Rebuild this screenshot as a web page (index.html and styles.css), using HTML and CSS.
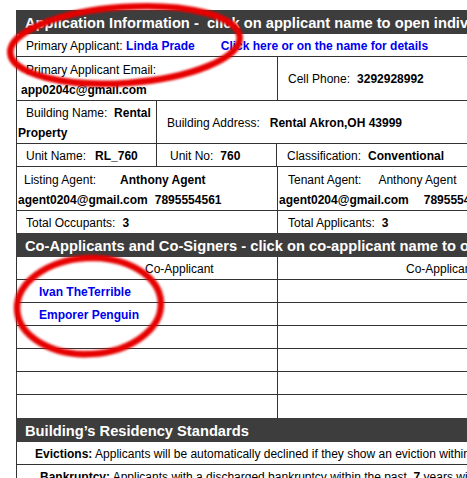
FILE: index.html
```html
<!DOCTYPE html>
<html>
<head>
<meta charset="utf-8">
<link rel="stylesheet" href="styles.css">
</head>
<body>
<div class="sheet">
  <div class="bar">Application Information -&nbsp; click on applicant name to open individual applications</div>

  <div class="row">
    <div class="cell wide pad-one">
      <span class="ind9">Primary Applicant: </span><span class="link">Linda Prade</span><span class="link details">Click here or on the name for details</span>
    </div>
  </div>

  <div class="row">
    <div class="cell half two-line">
      <div class="ind9">Primary Applicant Email:</div>
      <div class="val ind4">app0204c@gmail.com</div>
    </div>
    <div class="cell rest mid">
      <span class="ind10">Cell Phone:</span><span class="val gap8">3292928992</span>
    </div>
  </div>

  <div class="row">
    <div class="cell narrow tight">
      <span class="ind9">Building Name:</span>&nbsp;&nbsp;<b>Rental Property</b>
    </div>
    <div class="cell rest mid">
      <span class="ind10">Building Address:</span><span class="val gap10">Rental Akron,OH 43999</span>
    </div>
  </div>

  <div class="row">
    <div class="cell narrow pad-one">
      <span class="ind9">Unit Name:</span><span class="val gap9">RL_760</span>
    </div>
    <div class="cell unitno pad-one">
      <span class="ind12">Unit No:</span><span class="val gap8">760</span>
    </div>
    <div class="cell rest pad-one">
      <span class="ind10">Classification:</span><span class="val gap8">Conventional</span>
    </div>
  </div>

  <div class="row">
    <div class="cell half two-line">
      <div><span class="ind7">Listing Agent:</span><span class="val gap24">Anthony Agent</span></div>
      <div><span class="val">agent0204@gmail.com</span><span class="val gap8">7895554561</span></div>
    </div>
    <div class="cell rest two-line">
      <div><span class="ind10">Tenant Agent:</span><span class="gap17">Anthony Agent</span></div>
      <div><span class="val">agent0204@gmail.com</span><span class="val gap15">7895554561</span></div>
    </div>
  </div>

  <div class="row last">
    <div class="cell half totals">
      <span class="ind9">Total Occupants:</span><span class="val gap8">3</span>
    </div>
    <div class="cell rest totals">
      <span class="ind10">Total Applicants:</span><span class="val gap8">3</span>
    </div>
  </div>

  <div class="bar">Co-Applicants and Co-Signers - click on co-applicant name to open individual applications</div>

  <div class="row">
    <div class="cell half pad-one"><span class="colhead">Co-Applicant</span></div>
    <div class="cell rest pad-one"><span class="colhead">Co-Applicant</span></div>
  </div>
  <div class="row">
    <div class="cell half pad-one"><span class="link name">Ivan TheTerrible</span></div>
    <div class="cell rest pad-one"></div>
  </div>
  <div class="row">
    <div class="cell half pad-one"><span class="link name">Emporer Penguin</span></div>
    <div class="cell rest pad-one"></div>
  </div>
  <div class="row">
    <div class="cell half pad-one"></div>
    <div class="cell rest pad-one"></div>
  </div>
  <div class="row">
    <div class="cell half pad-one"></div>
    <div class="cell rest pad-one"></div>
  </div>
  <div class="row">
    <div class="cell half pad-one"></div>
    <div class="cell rest pad-one"></div>
  </div>
  <div class="row last">
    <div class="cell half pad-one final"></div>
    <div class="cell rest pad-one final"></div>
  </div>

  <div class="bar">Building’s Residency Standards</div>

  <div class="row">
    <div class="cell wide pad-one rule-evict">
      <b>Evictions:</b> Applicants will be automatically declined if they show an eviction within the past 5 years.
    </div>
  </div>
  <div class="row">
    <div class="cell wide pad-one rule-bank">
      <b>Bankruptcy:</b> Applicants with a discharged bankruptcy within the past&nbsp; <b>7</b> years will be declined.
    </div>
  </div>
</div>

<svg class="marks" width="467" height="478" viewBox="0 0 467 478">
  <defs>
    <filter id="soft" x="-20%" y="-20%" width="140%" height="140%">
      <feGaussianBlur stdDeviation="1.3"/>
    </filter>
  </defs>
  <g filter="url(#soft)" fill="none" stroke="#e60000">
    <ellipse cx="125" cy="45" rx="115" ry="38" stroke-width="6.5" transform="rotate(-4 125 45)"/>
    <ellipse cx="89" cy="306" rx="72" ry="48" stroke-width="6.5" transform="rotate(-3 89 306)"/>
  </g>
</svg>
</body>
</html>
```

FILE: styles.css
```css
html, body {
  margin: 0;
  padding: 0;
  background: #ffffff;
}

body {
  position: relative;
  width: 467px;
  height: 478px;
  overflow: hidden;
  font-family: "Liberation Sans", Arial, sans-serif;
  font-size: 12px;
  color: #000000;
}

.sheet {
  margin: 10px 0 0 16px;
  width: 720px;
  border-left: 1px solid #333333;
}

.bar {
  background: #3d3d3d;
  color: #ffffff;
  font-weight: bold;
  font-size: 14.7px;
  line-height: 22px;
  padding: 2px 0 0 9px;
  white-space: nowrap;
  margin-left: -1px;
}

.row {
  display: flex;
  border-bottom: 1px solid #333333;
}

.row.last {
  border-bottom: none;
}

.cell {
  box-sizing: border-box;
  padding-left: 1px;
  white-space: nowrap;
}

.cell + .cell {
  border-left: 1px solid #333333;
}

.wide { width: 100%; }
.half { width: 260px; }
.narrow { width: 139px; }
.unitno { width: 120px; }
.rest { flex: 1; }

.pad-one {
  padding-top: 3px;
  line-height: 19px;
  min-height: 22px;
}

.pad-one.final {
  min-height: 23px;
}

.two-line {
  padding-top: 3px;
  line-height: 20px;
}

.tight {
  padding-top: 3px;
  line-height: 19.5px;
  white-space: normal;
}

.mid {
  display: flex;
  align-items: center;
  padding-top: 1px;
}

.totals {
  padding-top: 2px;
  line-height: 20px;
}

.val { font-weight: bold; }

.link {
  color: #0000ee;
  font-weight: bold;
}

.details { margin-left: 26px; }
.name { margin-left: 21px; }

.colhead { margin-left: 127px; }

.ind4 { margin-left: 3px; }
.ind7 { margin-left: 6px; }
.ind9 { margin-left: 8px; }
.ind10 { margin-left: 9px; }
.ind12 { margin-left: 12px; }

.gap8 { margin-left: 7px; }
.gap9 { margin-left: 9px; }
.gap10 { margin-left: 10px; }
.gap15 { margin-left: 15px; }
.gap17 { margin-left: 17px; }
.gap24 { margin-left: 24px; }

.rule-evict { padding-left: 18px; }
.rule-bank { padding-left: 23px; }

.marks {
  position: absolute;
  top: 0;
  left: 0;
  pointer-events: none;
}
```
